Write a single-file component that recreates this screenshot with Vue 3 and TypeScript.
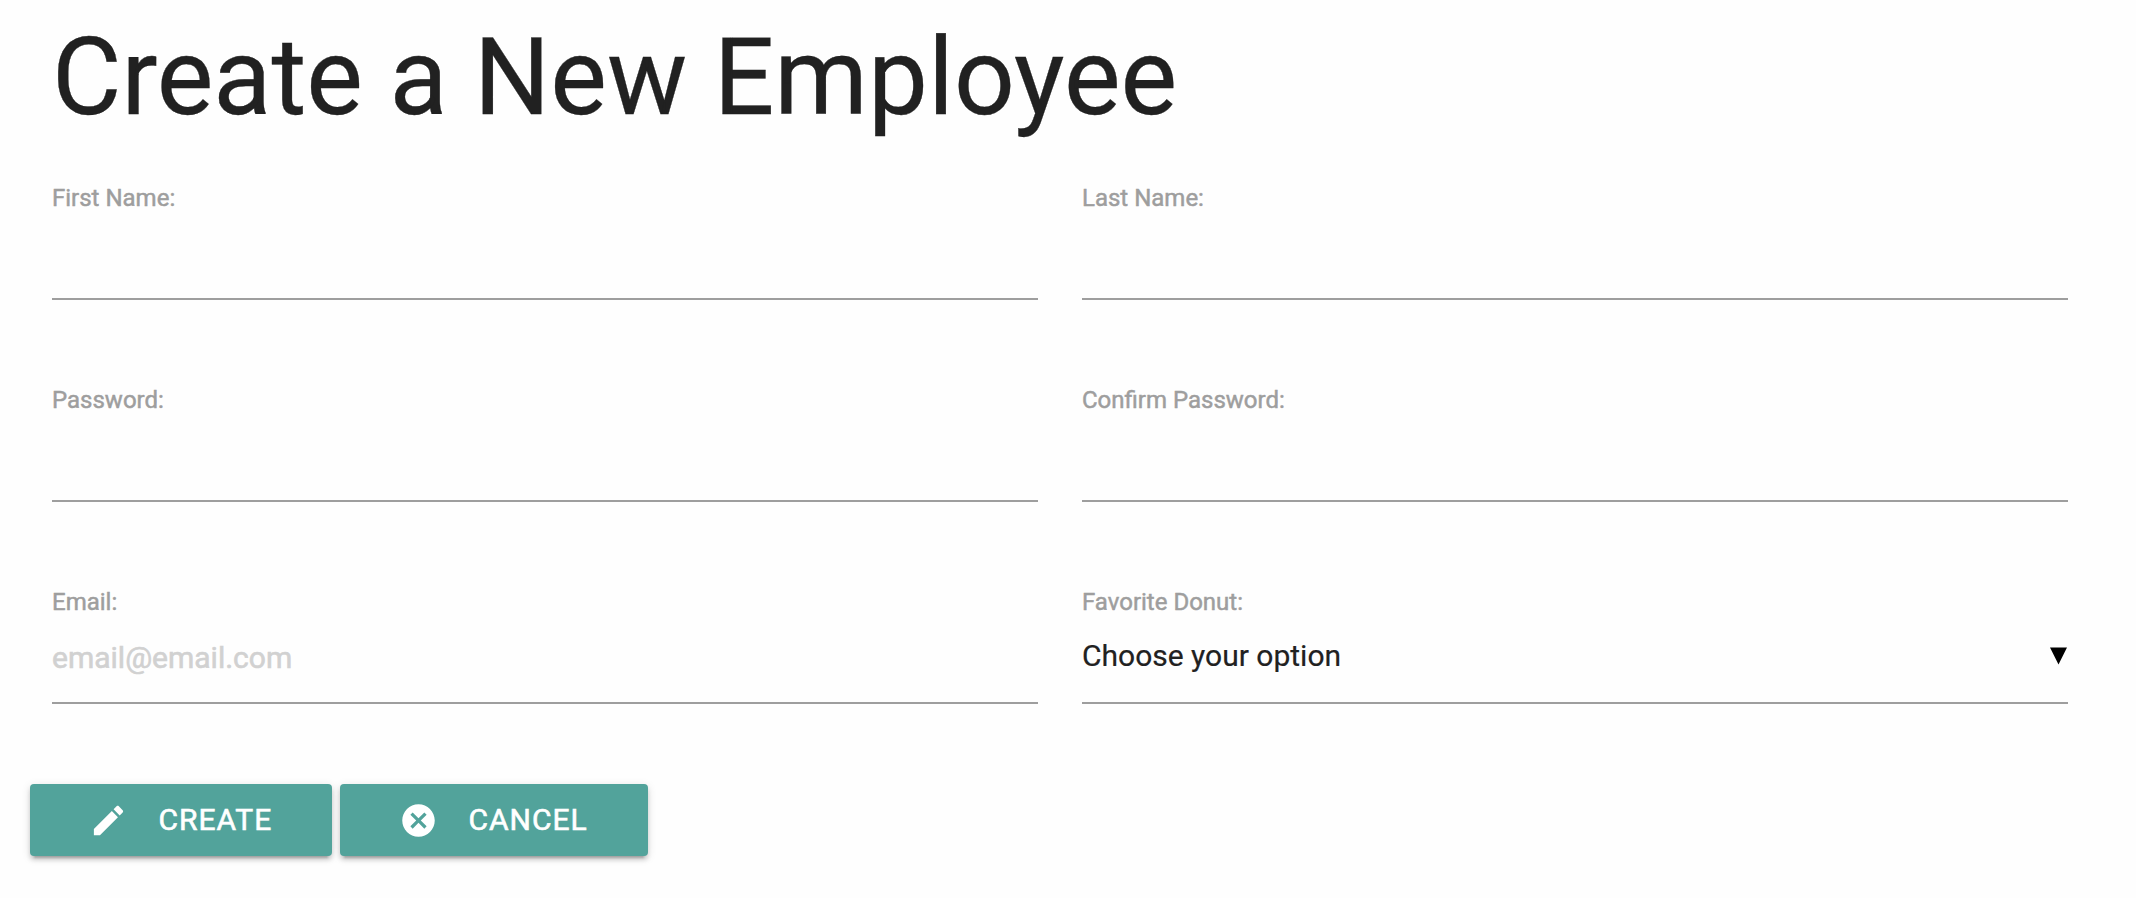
<script setup lang="ts">
import { ref } from 'vue'

interface Field {
  id: string
  label: string
  type: string
  placeholder?: string
}

const fields: Field[] = [
  { id: 'first-name', label: 'First Name:', type: 'text' },
  { id: 'last-name', label: 'Last Name:', type: 'text' },
  { id: 'password', label: 'Password:', type: 'password' },
  { id: 'confirm-password', label: 'Confirm Password:', type: 'password' },
  { id: 'email', label: 'Email:', type: 'email', placeholder: 'email@email.com' },
]

const values = ref<Record<string, string>>({})
</script>

<template>
  <main class="page">
    <h2 class="title">Create a New Employee</h2>
    <form class="form" @submit.prevent>
      <div class="fields">
        <div v-for="field in fields" :key="field.id" class="field">
          <label class="label" :for="field.id">{{ field.label }}</label>
          <input
            :id="field.id"
            v-model="values[field.id]"
            class="control"
            :type="field.type"
            :placeholder="field.placeholder"
          />
        </div>
        <div class="field">
          <span class="label">Favorite Donut:</span>
          <div class="control select" role="combobox" tabindex="0">
            <span class="choice">Choose your option</span>
            <svg class="caret" viewBox="0 0 18 18" aria-hidden="true">
              <path d="M0 0.4h17L8.5 17.6z" />
            </svg>
          </div>
        </div>
      </div>
      <div class="actions">
        <button class="btn create" type="submit">
          <svg class="icon" viewBox="0 0 24 24" aria-hidden="true">
            <path d="M3 17.25V21h3.75L17.81 9.94l-3.75-3.75L3 17.25zM20.71 7.04c.39-.39.39-1.02 0-1.41l-2.34-2.34c-.39-.39-1.02-.39-1.41 0l-1.83 1.83 3.75 3.75 1.83-1.83z" />
          </svg>
          <span class="caption">CREATE</span>
        </button>
        <button class="btn cancel" type="button">
          <svg class="icon" viewBox="0 0 24 24" aria-hidden="true">
            <path d="M12 2C6.47 2 2 6.47 2 12s4.47 10 10 10 10-4.47 10-10S17.53 2 12 2zm5 13.59L15.59 17 12 13.41 8.41 17 7 15.59 10.59 12 7 8.41 8.41 7 12 10.59 15.59 7 17 8.41 13.41 12 17 15.59z" />
          </svg>
          <span class="caption">CANCEL</span>
        </button>
      </div>
    </form>
  </main>
</template>

<style>
body {
  margin: 0;
  background: #fefefe;
}
</style>

<style scoped>
.page {
  box-sizing: border-box;
  height: 898px;
  padding: 19px 68px 0 30px;
  overflow: hidden;
  background: #fefefe;
  font-family: Roboto, "Liberation Sans", sans-serif;
  color: #212121;
}
.title {
  margin: 0 0 0 22px;
  font-size: 106.8px;
  line-height: 118px;
  font-weight: 400;
  white-space: nowrap;
  -webkit-text-stroke: 0.3px currentColor;
}
.fields {
  display: grid;
  grid-template-columns: 1fr 1fr;
  grid-auto-rows: 202px;
  column-gap: 44px;
  margin: 43px 0 0 22px;
}
.field {
  display: flex;
  flex-direction: column;
  height: 120px;
}
.label {
  height: 34px;
  font-size: 24px;
  line-height: 36px;
  color: #9e9e9e;
  -webkit-text-stroke: 0.5px currentColor;
}
.control {
  box-sizing: border-box;
  width: 100%;
  height: 86px;
  padding: 0 0 6px;
  border: 0;
  border-bottom: 2px solid #9e9e9e;
  border-radius: 0;
  outline: 0;
  background: transparent;
  font: 400 30px/40px Roboto, "Liberation Sans", sans-serif;
  color: #212121;
}
.control::placeholder {
  color: #d1d1d1;
  opacity: 1;
  -webkit-text-stroke: 0.6px #d1d1d1;
}
.select {
  display: flex;
  align-items: center;
  justify-content: space-between;
  padding-bottom: 8px;
}
.choice {
  -webkit-text-stroke: 0.2px currentColor;
}
.caret {
  width: 18px;
  height: 18px;
  fill: #000;
}
.actions {
  display: flex;
  gap: 8px;
  margin-top: -2px;
}
.btn {
  box-sizing: border-box;
  display: flex;
  align-items: center;
  height: 72px;
  padding: 0 0 0 59.3px;
  border: 0;
  border-radius: 4px;
  background: #52a39b;
  box-shadow: 0 4px 4px rgba(0, 0, 0, 0.14), 0 2px 10px rgba(0, 0, 0, 0.12), 0 6px 2px -4px rgba(0, 0, 0, 0.2);
  font: 400 30px/72px Roboto, "Liberation Sans", sans-serif;
  letter-spacing: 1px;
  color: #fff;
}
.create {
  width: 302px;
}
.cancel {
  width: 308px;
}
.caption {
  -webkit-text-stroke: 0.6px currentColor;
}
.icon {
  flex: none;
  width: 39px;
  height: 39px;
  margin-right: 30.2px;
  fill: currentColor;
}
</style>
